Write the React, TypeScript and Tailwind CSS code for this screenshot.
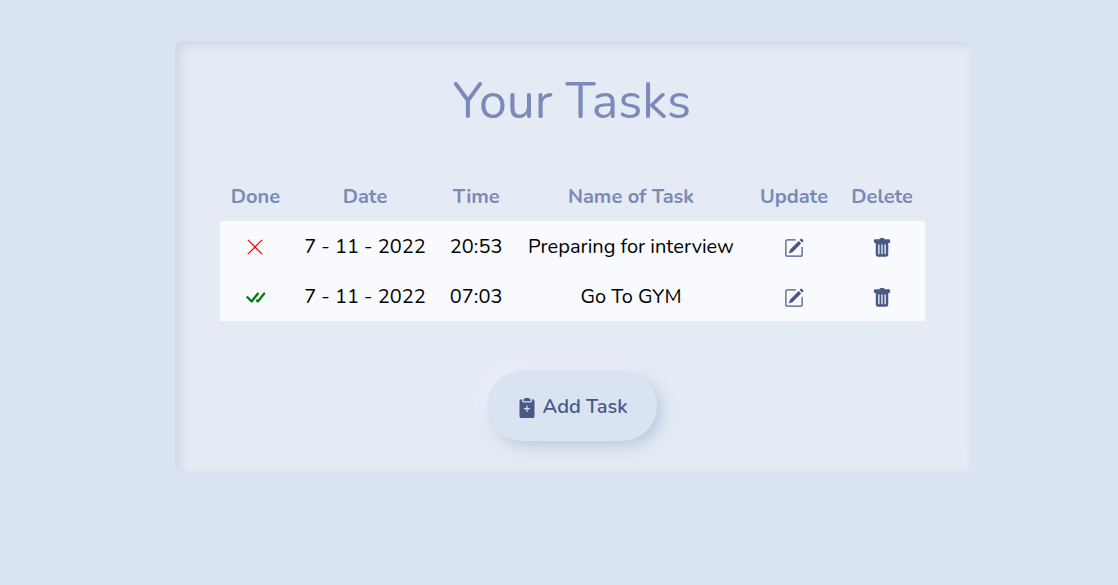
import {
  BsCheckAll,
  BsClipboard2PlusFill,
  BsPencilSquare,
  BsTrashFill,
  BsXLg,
} from "react-icons/bs";

type Task = { done: boolean; date: string; time: string; name: string };

const tasks: Task[] = [
  { done: false, date: "7 - 11 - 2022", time: "20:53", name: "Preparing for interview" },
  { done: true, date: "7 - 11 - 2022", time: "07:03", name: "Go To GYM" },
];

const columns = ["Done", "Date", "Time", "Name of Task", "Update", "Delete"];

function TaskRow({ task }: { task: Task }) {
  return (
    <tr className="h-[50px] bg-[#f8fafe]">
      <td className="px-2.5 pt-0.5">
        <button
          type="button"
          aria-label={task.done ? "Mark as not done" : "Mark as done"}
          className="flex w-full items-center justify-center"
        >
          {task.done ? (
            <BsCheckAll className="size-[25px] text-[#008000]" />
          ) : (
            <BsXLg className="size-5 text-[#ff0000]" />
          )}
        </button>
      </td>
      <td className="px-2.5 pt-0.5">{task.date}</td>
      <td className="px-2.5 pt-0.5">{task.time}</td>
      <td className="px-2.5 pt-0.5">{task.name}</td>
      <td className="px-2.5 pt-1">
        <button type="button" aria-label={`Update ${task.name}`} className="flex w-full justify-center text-[#4a5888]">
          <BsPencilSquare className="size-5" />
        </button>
      </td>
      <td className="px-2.5 pt-1">
        <button type="button" aria-label={`Delete ${task.name}`} className="flex w-full justify-center text-[#4a5888]">
          <BsTrashFill className="size-5" />
        </button>
      </td>
    </tr>
  );
}

export default function App() {
  return (
    <div className="flex min-h-screen items-start justify-center bg-[#dae3f1] pt-[41px] pb-10 pl-[26px] font-[Nunito,Lato,sans-serif] text-xl text-black">
      <main className="flex w-full max-w-[795px] flex-col items-center rounded-lg bg-[#e4ebf4] px-[45px] py-[30px] shadow-[inset_5px_5px_10px_#cfd7e3,inset_-5px_-5px_10px_#e5ebf3]">
        <h1 className="text-[50px] leading-[62px] text-[#7b8ab8]">Your Tasks</h1>
        <table className="mt-[38px] w-full border-collapse text-center">
          <thead>
            <tr className="h-[50px] text-[#7b8ab8]">
              {columns.map((column) => (
                <th key={column} scope="col" className="px-2.5 pt-0.5 font-bold">
                  {column}
                </th>
              ))}
            </tr>
          </thead>
          <tbody>
            {tasks.map((task) => (
              <TaskRow key={task.name} task={task} />
            ))}
          </tbody>
        </table>
        <button
          type="button"
          className="mt-[50px] flex h-[70px] items-center gap-1.5 rounded-full bg-[#dae3f1] px-[30px] pt-0.5 font-semibold text-[#4a5888] shadow-[5px_5px_15px_#b9c8de,-5px_-5px_15px_#f0f3fb]"
        >
          <BsClipboard2PlusFill className="mt-0.5 size-5" />
          Add Task
        </button>
      </main>
    </div>
  );
}
